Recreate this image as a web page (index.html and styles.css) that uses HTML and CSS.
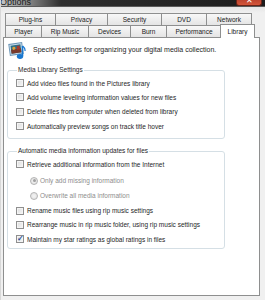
FILE: index.html
```html
<!DOCTYPE html>
<html>
<head>
<meta charset="utf-8">
<link rel="stylesheet" href="styles.css">
</head>
<body>
<div class="window">
  <div class="titlebar">
    <span class="title">Options</span>
    <span class="close">&#x2715;</span>
  </div>
  <div class="tabstrip">
    <div class="row">
      <div class="tab w-plug">Plug-ins</div>
      <div class="tab w-priv">Privacy</div>
      <div class="tab w-sec">Security</div>
      <div class="tab w-dvd">DVD</div>
      <div class="tab w-net">Network</div>
    </div>
    <div class="row">
      <div class="tab w-player">Player</div>
      <div class="tab w-rip">Rip Music</div>
      <div class="tab w-dev">Devices</div>
      <div class="tab w-burn">Burn</div>
      <div class="tab w-perf">Performance</div>
      <div class="tab w-lib selected">Library</div>
    </div>
  </div>
  <div class="panel">
    <div class="header">
      <svg class="icon" width="18" height="20" viewBox="0 0 18 20">
        <g transform="rotate(-8 8 9)">
          <rect x="1.5" y="3.5" width="13" height="11" fill="#cfe3f2" stroke="#6f98b8"/>
          <rect x="3" y="5" width="10" height="8" fill="#2d6f86"/>
          <rect x="3" y="9" width="10" height="4" fill="#7a3a2c"/>
          <circle cx="6" cy="8" r="1.6" fill="#e0a23a"/>
          <rect x="9" y="6" width="3" height="4" fill="#a83a30"/>
        </g>
        <path d="M14.5 6 L14.5 16" stroke="#1a78d0" stroke-width="1.6"/>
        <path d="M14.5 6 C16 7.5 17.5 8 17 11" stroke="#1a78d0" stroke-width="1.2" fill="none"/>
        <ellipse cx="12" cy="16.5" rx="3.2" ry="2.4" fill="#1a78d0"/>
      </svg>
      <span class="intro">Specify settings for organizing your digital media collection.</span>
    </div>

    <fieldset class="group g1">
      <legend>Media Library Settings</legend>
      <div class="opt"><span class="cb"></span>Add video files found in the Pictures library</div>
      <div class="opt"><span class="cb"></span>Add volume leveling information values for new files</div>
      <div class="opt"><span class="cb"></span>Delete files from computer when deleted from library</div>
      <div class="opt"><span class="cb"></span>Automatically preview songs on track title hover</div>
    </fieldset>

    <fieldset class="group g2">
      <legend>Automatic media information updates for files</legend>
      <div class="opt"><span class="cb"></span>Retrieve additional information from the Internet</div>
      <div class="opt radio-row first-radio disabled"><span class="rb on"></span>Only add missing information</div>
      <div class="opt radio-row disabled"><span class="rb"></span>Overwrite all media information</div>
      <div class="opt"><span class="cb"></span>Rename music files using rip music settings</div>
      <div class="opt"><span class="cb"></span>Rearrange music in rip music folder, using rip music settings</div>
      <div class="opt"><span class="cb checked">&#x2713;</span>Maintain my star ratings as global ratings in files</div>
    </fieldset>
  </div>
</div>
</body>
</html>
```

FILE: styles.css
```css
* { box-sizing: border-box; }
html, body { margin: 0; padding: 0; }
body {
  width: 265px;
  height: 300px;
  overflow: hidden;
  font-family: "Liberation Sans", Arial, sans-serif;
  font-size: 6.5px;
  color: #1e1e1e;
}
.window {
  width: 265px;
  height: 300px;
  background: #f0f0f0;
  display: flex;
  flex-direction: column;
  border-left: 1px solid #d8d8d8;
}
.titlebar {
  height: 7px;
  flex: none;
  display: flex;
  justify-content: space-between;
  align-items: flex-end;
  background: linear-gradient(to right, #c4c4c4 0px, #8a8a8a 26px, #2e2e2e 60px, #1c1c1c 100%);
  overflow: hidden;
  border-bottom: 1px solid #5a5a5a;
}
.title {
  font-size: 9px;
  line-height: 9px;
  color: #1a1a1a;
  margin-left: -1px;
  transform: translateY(1px);
}
.close {
  width: 26px;
  height: 7px;
  margin-right: 3px;
  background: linear-gradient(to bottom, #b8402c, #d4553a);
  border: 1px solid #6a2418;
  border-top: none;
  border-radius: 0 0 3px 3px;
  color: #fff;
  font-size: 8px;
  line-height: 4px;
  text-align: center;
  overflow: hidden;
}
.tabstrip {
  flex: none;
  padding: 6px 0 0 4px;
  background: linear-gradient(to bottom, #e6e6e6, #f0f0f0 6px);
}
.row {
  display: flex;
  height: 12px;
}
.tab {
  height: 12px;
  line-height: 11px;
  text-align: center;
  border: 1px solid #8e8f8f;
  border-bottom: none;
  margin-right: -1px;
  background: linear-gradient(to bottom, #f8f8f8, #e4e4e4);
  color: #1a1a1a;
  white-space: nowrap;
}
.w-plug { width: 51px; }
.w-priv { width: 53px; }
.w-sec { width: 55px; }
.w-dvd { width: 46px; }
.w-net { width: 46px; }
.w-player { width: 37px; }
.w-rip { width: 48px; }
.w-dev { width: 43px; }
.w-burn { width: 37px; }
.w-perf { width: 56px; }
.w-lib { width: 33px; }
.tab.selected {
  background: #fff;
  height: 14px;
  margin-top: -1px;
  margin-bottom: -1px;
  margin-left: -1px;
  width: 35px;
  line-height: 13px;
  position: relative;
  z-index: 2;
}
.panel {
  flex: 1;
  margin: 0 5px 4px 2px;
  background: #fff;
  border: 1px solid #8e8f8f;
  position: relative;
  z-index: 1;
}
.header {
  height: 22px;
  display: flex;
  align-items: center;
  padding-left: 4px;
}
.icon { flex: none; margin-top: 2px; }
.intro { margin-left: 7px; font-size: 7px; }
.group {
  margin: 6px 0 0 3px;
  width: 218px;
  padding: 2px 0 5px 8px;
  border: 1px solid #d5dfe5;
  border-radius: 3px;
  min-width: 0;
}
.g2 { margin-top: 8px; padding-top: 2px; padding-bottom: 2px; }
legend {
  padding: 0 1px;
  margin-left: 1px;
  line-height: 8px;
  color: #1e1e1e;
}
.opt {
  height: 14.3px;
  display: flex;
  align-items: center;
  white-space: nowrap;
}
.radio-row { height: 15px; padding-left: 14px; }
.first-radio { margin-top: 2px; }
.disabled { color: #8d8d8d; }
.cb {
  width: 8px;
  height: 8px;
  flex: none;
  border: 1px solid #8f8f8f;
  background: linear-gradient(135deg, #dcdcdc, #f6f6f6);
  box-shadow: inset 0 0 0 1px #f4f4f4;
  margin-right: 3px;
  font-size: 8px;
  line-height: 6px;
  text-align: center;
  color: #2a4f9a;
  font-weight: bold;
}
.rb {
  width: 8px;
  height: 8px;
  flex: none;
  border: 1px solid #b4b4b4;
  border-radius: 50%;
  background: radial-gradient(circle, #f4f4f4, #dedede);
  margin-right: 2px;
  display: flex;
  align-items: center;
  justify-content: center;
}
.rb.on::after {
  content: "";
  width: 3px;
  height: 3px;
  border-radius: 50%;
  background: #a0a0a0;
}
```
